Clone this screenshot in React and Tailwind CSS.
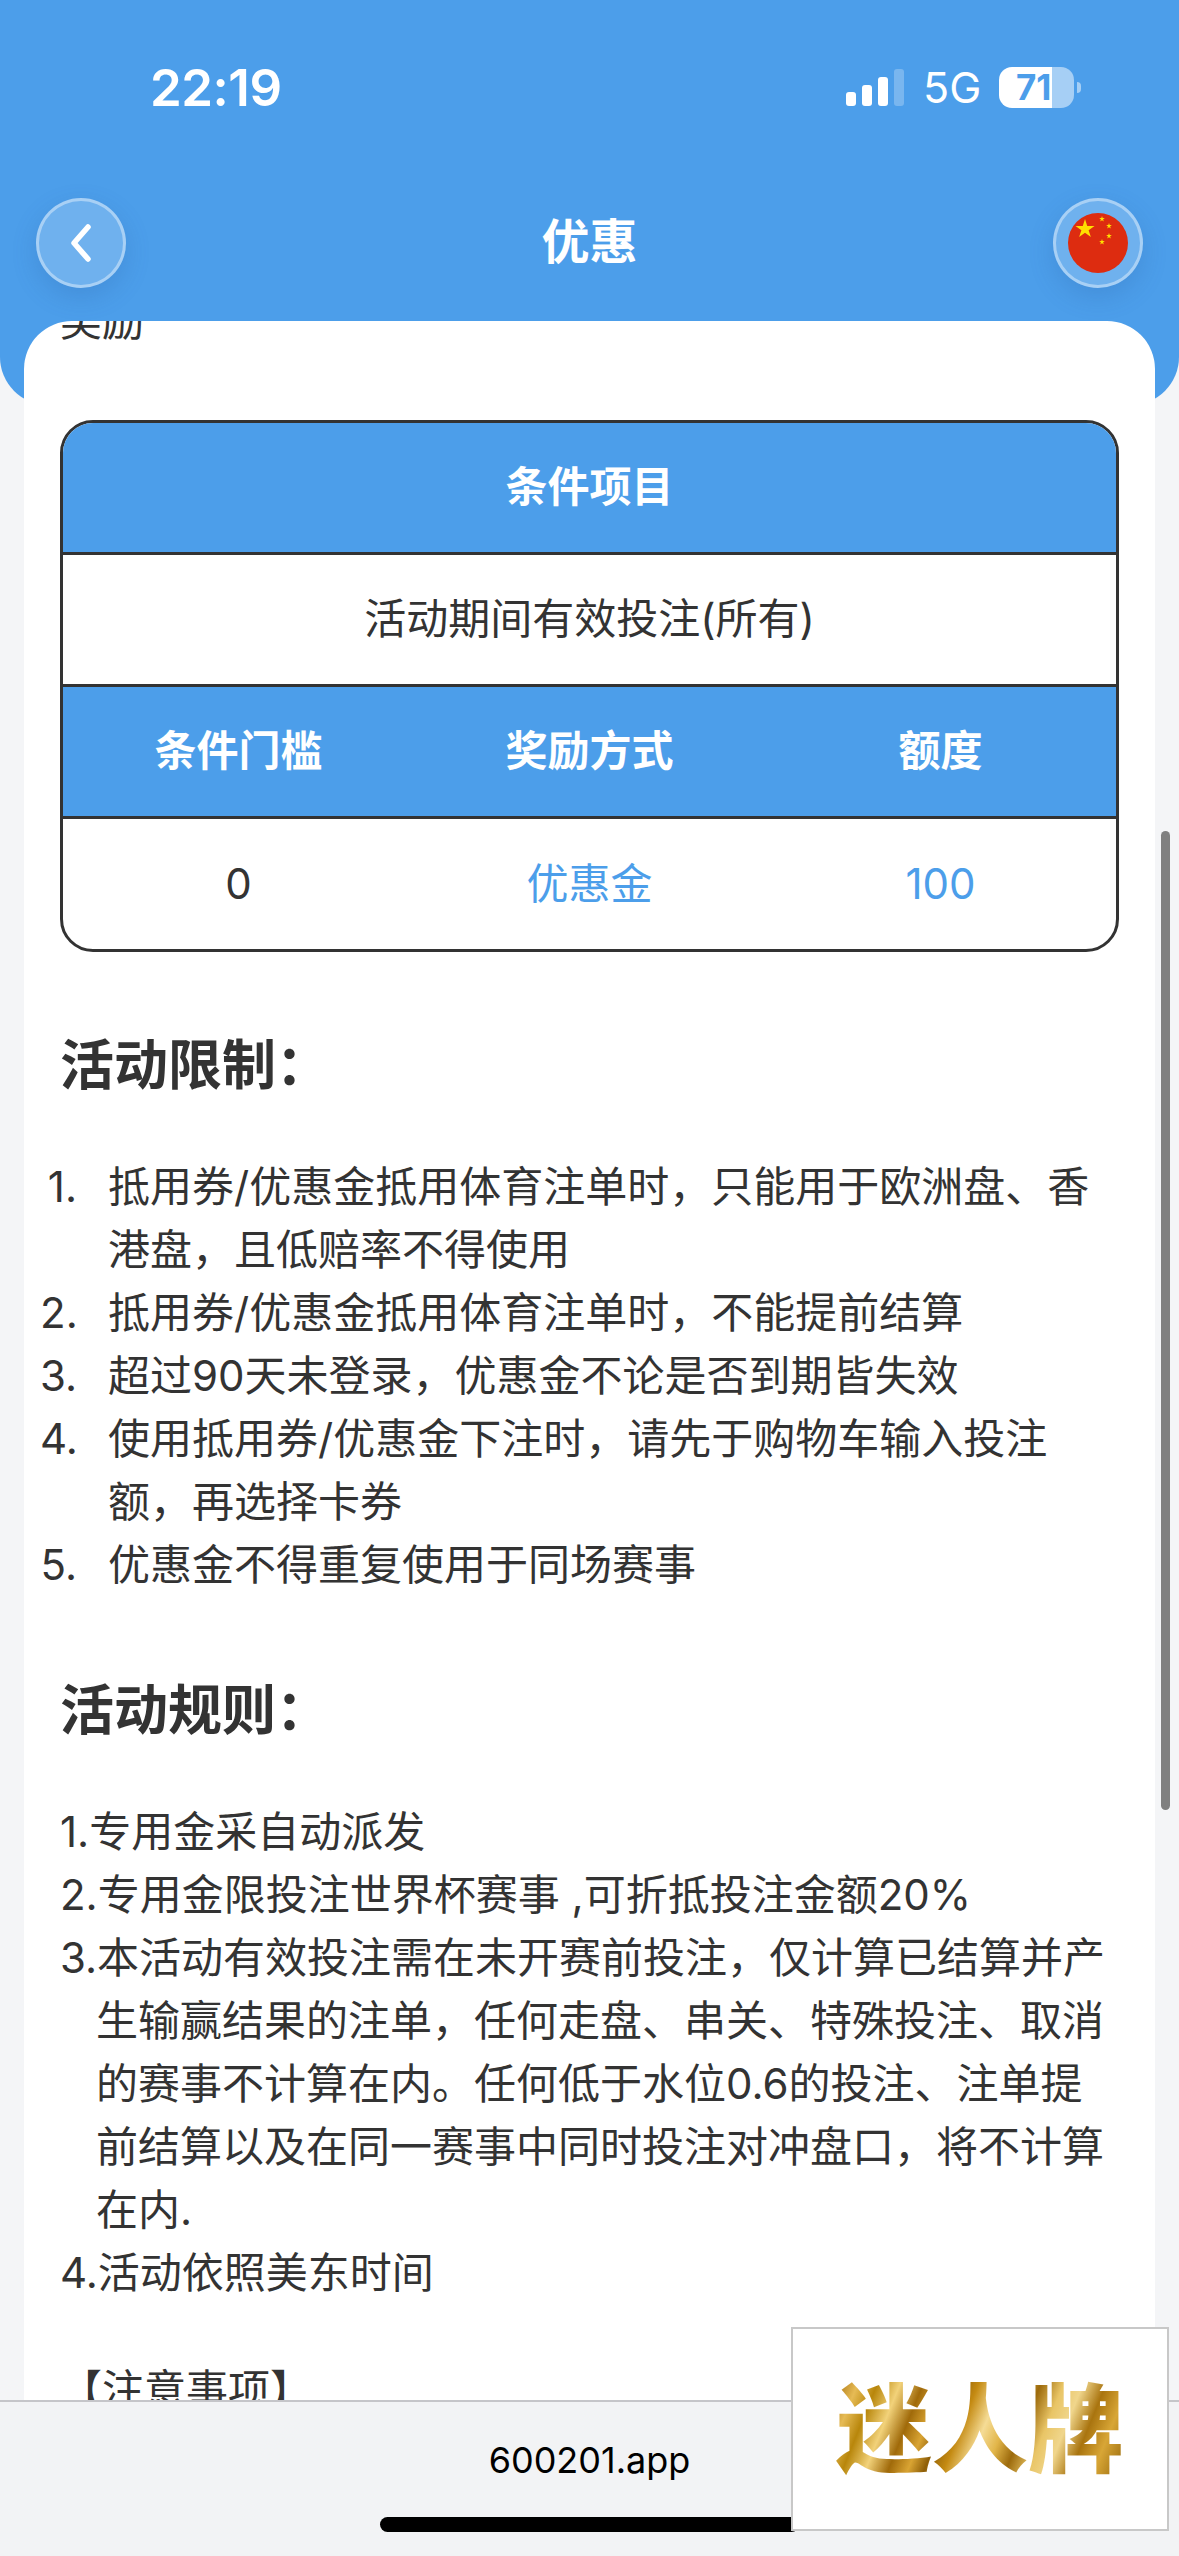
import React from 'react';

const FONT = "font-['Inter','Noto_Sans_CJK_SC',sans-serif]";

const LIMITS = [
  '抵用券/优惠金抵用体育注单时，只能用于欧洲盘、香港盘，且低赔率不得使用',
  '抵用券/优惠金抵用体育注单时，不能提前结算',
  '超过90天未登录，优惠金不论是否到期皆失效',
  '使用抵用券/优惠金下注时，请先于购物车输入投注额，再选择卡券',
  '优惠金不得重复使用于同场赛事',
];

const RULES = [
  '1.专用金采自动派发',
  '2.专用金限投注世界杯赛事 ,可折抵投注金额20%',
  '3.本活动有效投注需在未开赛前投注，仅计算已结算并产生输赢结果的注单，任何走盘、串关、特殊投注、取消的赛事不计算在内。任何低于水位0.6的投注、注单提前结算以及在同一赛事中同时投注对冲盘口，将不计算在内.',
  '4.活动依照美东时间',
];

function Star({ cx, cy, r }) {
  // five pointed star for the flag
  const pts = [];
  for (let i = 0; i < 10; i++) {
    const rad = i % 2 === 0 ? r : r * 0.382;
    const a = (Math.PI / 5) * i - Math.PI / 2;
    pts.push(`${cx + rad * Math.cos(a)},${cy + rad * Math.sin(a)}`);
  }
  return <polygon points={pts.join(' ')} fill="#ffe000" />;
}

function StatusBar() {
  return (
    <div className="flex items-center justify-between h-[42px] pl-[150px] pr-[98px] text-white">
      <span className="text-[51px] font-semibold leading-none tracking-[-0.5px]">22:19</span>
      <div className="flex items-center">
        <div className="flex items-end gap-[6px] h-[37px]">
          <div className="w-[10px] h-[14px] rounded-[3px] bg-white" />
          <div className="w-[10px] h-[21px] rounded-[3px] bg-white" />
          <div className="w-[10px] h-[29px] rounded-[3px] bg-white" />
          <div className="w-[10px] h-[37px] rounded-[3px] bg-white/25" />
        </div>
        <span className="ml-[19px] w-[76px] text-[43px] leading-none">5G</span>
        <div className="relative flex w-[75px] h-[41px] rounded-[13px] overflow-hidden">
          <div className="w-[53px] bg-white" />
          <div className="flex-1 bg-white/50" />
          <span className="absolute left-[17px] top-[3px] text-[35px] leading-[35px] font-bold text-[#4c9eea]">71</span>
        </div>
        <div className="ml-[3px] w-[4px] h-[11px] rounded-r-[4px] bg-white/50" />
      </div>
    </div>
  );
}

function NavButton({ children }) {
  return (
    <div className="flex items-center justify-center w-[90px] h-[90px] rounded-full border-[3px] border-white/40 bg-white/20 shadow-[0_9px_24px_rgba(40,90,160,0.22)]">
      {children}
    </div>
  );
}

function Header() {
  return (
    <div className="h-[405px] pt-[66px] bg-[#4c9eea] rounded-b-[48px]">
      <StatusBar />
      <div className="flex items-center justify-between mt-[90px] px-[36px]">
        <NavButton>
          <svg className="mr-[3px]" width="30" height="44" viewBox="0 0 30 44" fill="none">
            <path d="M23 6 L9 22 L23 38" stroke="white" strokeWidth="5.5" strokeLinecap="round" strokeLinejoin="round" />
          </svg>
        </NavButton>
        <span className="mb-[3px] text-[48px] font-semibold text-white leading-none">优惠</span>
        <NavButton>
          <svg width="60" height="60" viewBox="0 0 60 60">
            <circle cx="30" cy="30" r="30" fill="#dd2c10" />
            <Star cx={17} cy={16} r={10} />
            <Star cx={34} cy={6} r={3} />
            <Star cx={41} cy={13} r={3} />
            <Star cx={41} cy={23} r={3} />
            <Star cx={34} cy={29} r={3} />
          </svg>
        </NavButton>
      </div>
    </div>
  );
}

function ConditionTable() {
  return (
    <div className="mt-[68px] rounded-[33px] border-[3px] border-[#333] overflow-hidden text-[42px] text-center">
      <div className="flex items-center justify-center h-[132px] pb-[3px] border-b-[3px] border-[#333] bg-[#4c9eea] text-white font-semibold">
        条件项目
      </div>
      <div className="flex items-center justify-center h-[132px] pb-[3px] border-b-[3px] border-[#333]">
        活动期间有效投注(所有)
      </div>
      <div className="grid grid-cols-3 items-center h-[132px] pb-[3px] border-b-[3px] border-[#333] bg-[#4c9eea] text-white font-semibold">
        <span>条件门槛</span>
        <span>奖励方式</span>
        <span>额度</span>
      </div>
      <div className="grid grid-cols-3 items-center h-[130px] pb-[2px]">
        <span>0</span>
        <span className="text-[#4c9eea]">优惠金</span>
        <span className="text-[#4c9eea]">100</span>
      </div>
    </div>
  );
}

function Card() {
  return (
    <div className="relative -mt-[84px] mx-[24px] h-[2300px] rounded-t-[48px] bg-white overflow-hidden px-[36px] text-[42px] leading-[63px] text-[#333]">
      <p className="-mt-[32px]">奖励</p>
      <ConditionTable />

      <h3 className="mt-[78px] text-[54px] leading-[72px] font-bold">活动限制：</h3>
      <ol className="mt-[53px] -ml-[20px]">
        {LIMITS.map((text, i) => (
          <li key={i} className="flex">
            <span className="w-[37px] shrink-0 text-right">{i + 1}.</span>
            <span className="ml-[31px]">{text}</span>
          </li>
        ))}
      </ol>

      <h3 className="mt-[79px] text-[54px] leading-[72px] font-bold">活动规则：</h3>
      <div className="mt-[53px]">
        {RULES.map((text) => (
          <p key={text} className="pl-[36px] -indent-[36px]">{text}</p>
        ))}
      </div>
      <p className="mt-[54px]">【注意事项】</p>
    </div>
  );
}

function LogoBox() {
  return (
    <div className="absolute left-[791px] top-[2327px] flex items-center justify-center w-[378px] h-[204px] border-2 border-[#c8c8c8] bg-white">
      <span className="text-[96px] font-black leading-none bg-[linear-gradient(112deg,#a8700c_0%,#e6bb55_7%,#b8860b_13%,#f2d27a_20%,#a06a0a_27%,#d9a433_33%,#8f5f08_38%,#c48a12_44%,#f5dc96_51%,#e2b64a_57%,#9c6a0c_63%,#e9c566_70%,#f0d68c_76%,#a9740f_83%,#d8a636_90%,#8f6108_100%)] bg-clip-text text-transparent">
        迷人牌
      </span>
    </div>
  );
}

function BrowserBar() {
  return (
    <div className="absolute left-0 right-0 bottom-0 h-[156px] border-t-2 border-[#c5c5c9] bg-[#f2f3f5]">
      <p className="mt-[36px] text-center text-[36px] leading-[44px] text-black">600201.app</p>
      <div className="mx-auto mt-[35px] w-[419px] h-[15px] rounded-full bg-black" />
    </div>
  );
}

export default function App() {
  return (
    <div className={`relative w-[1179px] h-[2556px] overflow-hidden bg-[#f4f5f7] ${FONT}`}>
      <Header />
      <Card />
      {/* scrollbar */}
      <div className="absolute left-[1161px] top-[831px] w-[9px] h-[979px] rounded-full bg-[#808080]" />
      <BrowserBar />
      <LogoBox />
    </div>
  );
}
